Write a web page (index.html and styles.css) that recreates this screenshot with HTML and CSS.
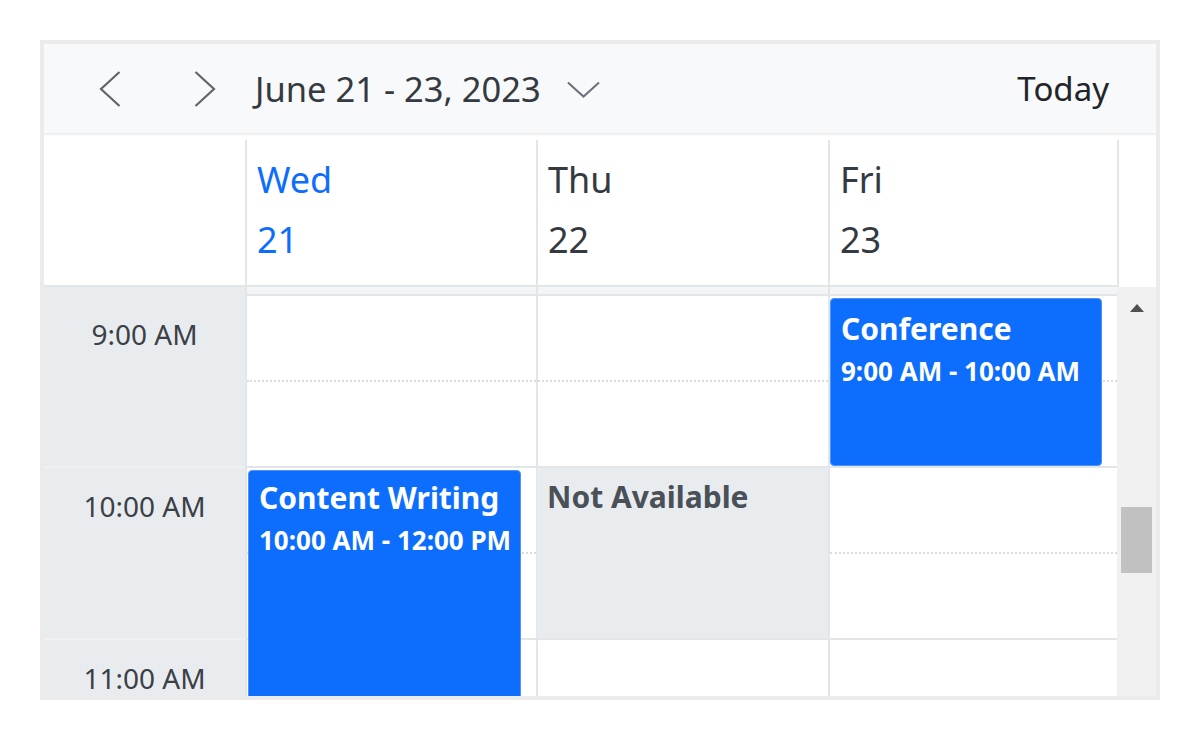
FILE: index.html
```html
<!DOCTYPE html>
<html lang="en">
<head>
<meta charset="utf-8">
<title>Scheduler</title>
<link rel="stylesheet" href="styles.css">
</head>
<body>
<div class="page">
  <div class="scheduler">
    <div class="toolbar">
      <div class="nav">
        <span class="icon-btn">
          <svg class="chev" width="22" height="36" viewBox="0 0 22 36"><path d="M20.5 1 L2 18 L20.5 35" fill="none" stroke="#5f656b" stroke-width="2.2"/></svg>
        </span>
        <span class="icon-btn next">
          <svg class="chev" width="22" height="36" viewBox="0 0 22 36"><path d="M1.5 1 L20 18 L1.5 35" fill="none" stroke="#5f656b" stroke-width="2.2"/></svg>
        </span>
        <span class="date-range">June 21 - 23, 2023</span>
        <svg class="dropdown" width="35" height="18" viewBox="0 0 35 18"><path d="M1 1.5 L17.5 16.5 L34 1.5" fill="none" stroke="#6c737a" stroke-width="2.2"/></svg>
      </div>
      <div class="today">Today</div>
    </div>

    <div class="header">
      <div class="corner"></div>
      <div class="day-head is-today"><div class="day-name">Wed</div><div class="day-date">21</div></div>
      <div class="day-head"><div class="day-name">Thu</div><div class="day-date">22</div></div>
      <div class="day-head"><div class="day-name">Fri</div><div class="day-date">23</div></div>
      <div class="head-spacer"></div>
    </div>

    <div class="main">
      <div class="grid-area">
        <div class="allday">
          <div class="allday-time"></div>
          <div class="allday-cell"></div>
          <div class="allday-cell"></div>
          <div class="allday-cell"></div>
        </div>
        <div class="content">
          <div class="time-col">
            <div class="hour"><span>9:00 AM</span></div>
            <div class="hour"><span>10:00 AM</span></div>
            <div class="hour"><span>11:00 AM</span></div>
          </div>
          <div class="day-col">
            <div class="slot half"></div><div class="slot full"></div>
            <div class="slot half"></div><div class="slot full"></div>
            <div class="slot half"></div>
            <div class="event ev-writing">
              <div class="event-title">Content Writing</div>
              <div class="event-time">10:00 AM - 12:00 PM</div>
            </div>
          </div>
          <div class="day-col">
            <div class="slot half"></div><div class="slot full"></div>
            <div class="slot half"></div><div class="slot full"></div>
            <div class="slot half"></div>
            <div class="blocked">Not Available</div>
          </div>
          <div class="day-col">
            <div class="slot half"></div><div class="slot full"></div>
            <div class="slot half"></div><div class="slot full"></div>
            <div class="slot half"></div>
            <div class="event ev-conf">
              <div class="event-title">Conference</div>
              <div class="event-time">9:00 AM - 10:00 AM</div>
            </div>
          </div>
        </div>
      </div>
      <div class="scrollbar">
        <div class="scroll-arrow"></div>
        <div class="scroll-thumb"></div>
      </div>
    </div>
  </div>
</div>
</body>
</html>
```

FILE: styles.css
```css
* { box-sizing: border-box; }
html, body { margin: 0; padding: 0; background: #fff; }
body { font-family: "Noto Sans", "Open Sans", sans-serif; color: #212529; }

.page { padding: 40px; }

.scheduler {
  width: 1120px;
  height: 660px;
  border: 4px solid #ebebeb;
  background: #fff;
  overflow: hidden;
  display: flex;
  flex-direction: column;
}

/* toolbar */
.toolbar {
  flex: none;
  height: 89px;
  background: #f8f9fa;
  display: flex;
  align-items: center;
  justify-content: space-between;
  padding: 0 46px 0 46px;
  box-shadow: 0 1px 3px rgba(0, 0, 0, 0.12);
  position: relative;
  z-index: 2;
}
.nav { display: flex; align-items: center; }
.icon-btn {
  width: 40px;
  height: 40px;
  display: flex;
  align-items: center;
  justify-content: center;
}
.icon-btn.next { margin-left: 55px; }
.chev { display: block; }
.date-range {
  margin-left: 30px;
  font-size: 34.5px;
  color: #343a40;
  white-space: nowrap;
}
.dropdown { display: block; margin-left: 26px; margin-top: 2px; width: 33px; height: 17px; }
.today { font-size: 33px; color: #212529; margin-right: 1px; }

/* header */
.header {
  flex: none;
  margin-top: 7px;
  height: 147px;
  display: grid;
  grid-template-columns: 201px 291px 292px 289px 39px;
}
.corner { border-bottom: 2px solid #e3e6e9; }
.day-head {
  border-left: 2px solid #e3e6e9;
  border-bottom: 2px solid #e3e6e9;
  padding: 10px 10px 0 10px;
  font-size: 36px;
  line-height: 60px;
  color: #343a40;
}
.day-head.is-today { color: #0d6efd; }
.head-spacer { border-left: 2px solid #e3e6e9; }

/* main area */
.main {
  flex: 1;
  display: flex;
  min-height: 0;
}
.grid-area {
  width: 1073px;
  display: flex;
  flex-direction: column;
  min-height: 0;
}
.allday {
  flex: none;
  height: 9px;
  display: grid;
  grid-template-columns: 201px 291px 292px 289px;
}
.allday-time { background: #e9ecef; }
.allday-cell {
  background: #f3f5f7;
  border-left: 2px solid #e3e6e9;
  border-bottom: 2px solid #e3e6e9;
}
.content {
  flex: 1;
  min-height: 0;
  overflow: hidden;
  display: grid;
  grid-template-columns: 201px 291px 292px 289px;
  align-items: start;
}
.time-col { background: #e9ecef; }
.hour {
  height: 172px;
  border-bottom: 2px solid #eef0f3;
  text-align: center;
  padding-top: 20px;
  font-size: 28px;
  line-height: 36px;
  color: #3a4046;
}
.day-col {
  position: relative;
  border-left: 2px solid #e3e6e9;
}
.slot { height: 86px; }
.slot.half { border-bottom: 2px dotted #d9dde1; }
.slot.full { border-bottom: 2px solid #e3e6e9; }

.event {
  position: absolute;
  background: #0d6efd;
  color: #fff;
  border: 1px solid #4f93f9;
  border-radius: 4px;
  padding: 7px 2px 0 10px;
  font-weight: 700;
  white-space: nowrap;
  overflow: hidden;
}
.event-title { font-size: 30px; line-height: 40px; }
.event-time { font-size: 26px; line-height: 44px; }
.ev-writing { left: 1px; top: 174px; width: 273px; height: 340px; }
.ev-conf { left: 0; top: 2px; width: 272px; height: 168px; padding-top: 10px; }

.blocked {
  position: absolute;
  left: -1px;
  right: 0;
  top: 172px;
  height: 170px;
  background: #e9ecef;
  padding: 9px 10px 0 10px;
  font-size: 30px;
  line-height: 40px;
  font-weight: 700;
  color: #495057;
}

/* scrollbar */
.scrollbar {
  width: 39px;
  background: #f1f1f1;
  padding-top: 17px;
}
.scroll-arrow {
  width: 0;
  height: 0;
  margin: 0 auto;
  border-left: 7px solid transparent;
  border-right: 7px solid transparent;
  border-bottom: 8px solid #505050;
}
.scroll-thumb {
  width: 31px;
  height: 66px;
  margin: 195px 0 0 4px;
  background: #c1c1c1;
}
```
